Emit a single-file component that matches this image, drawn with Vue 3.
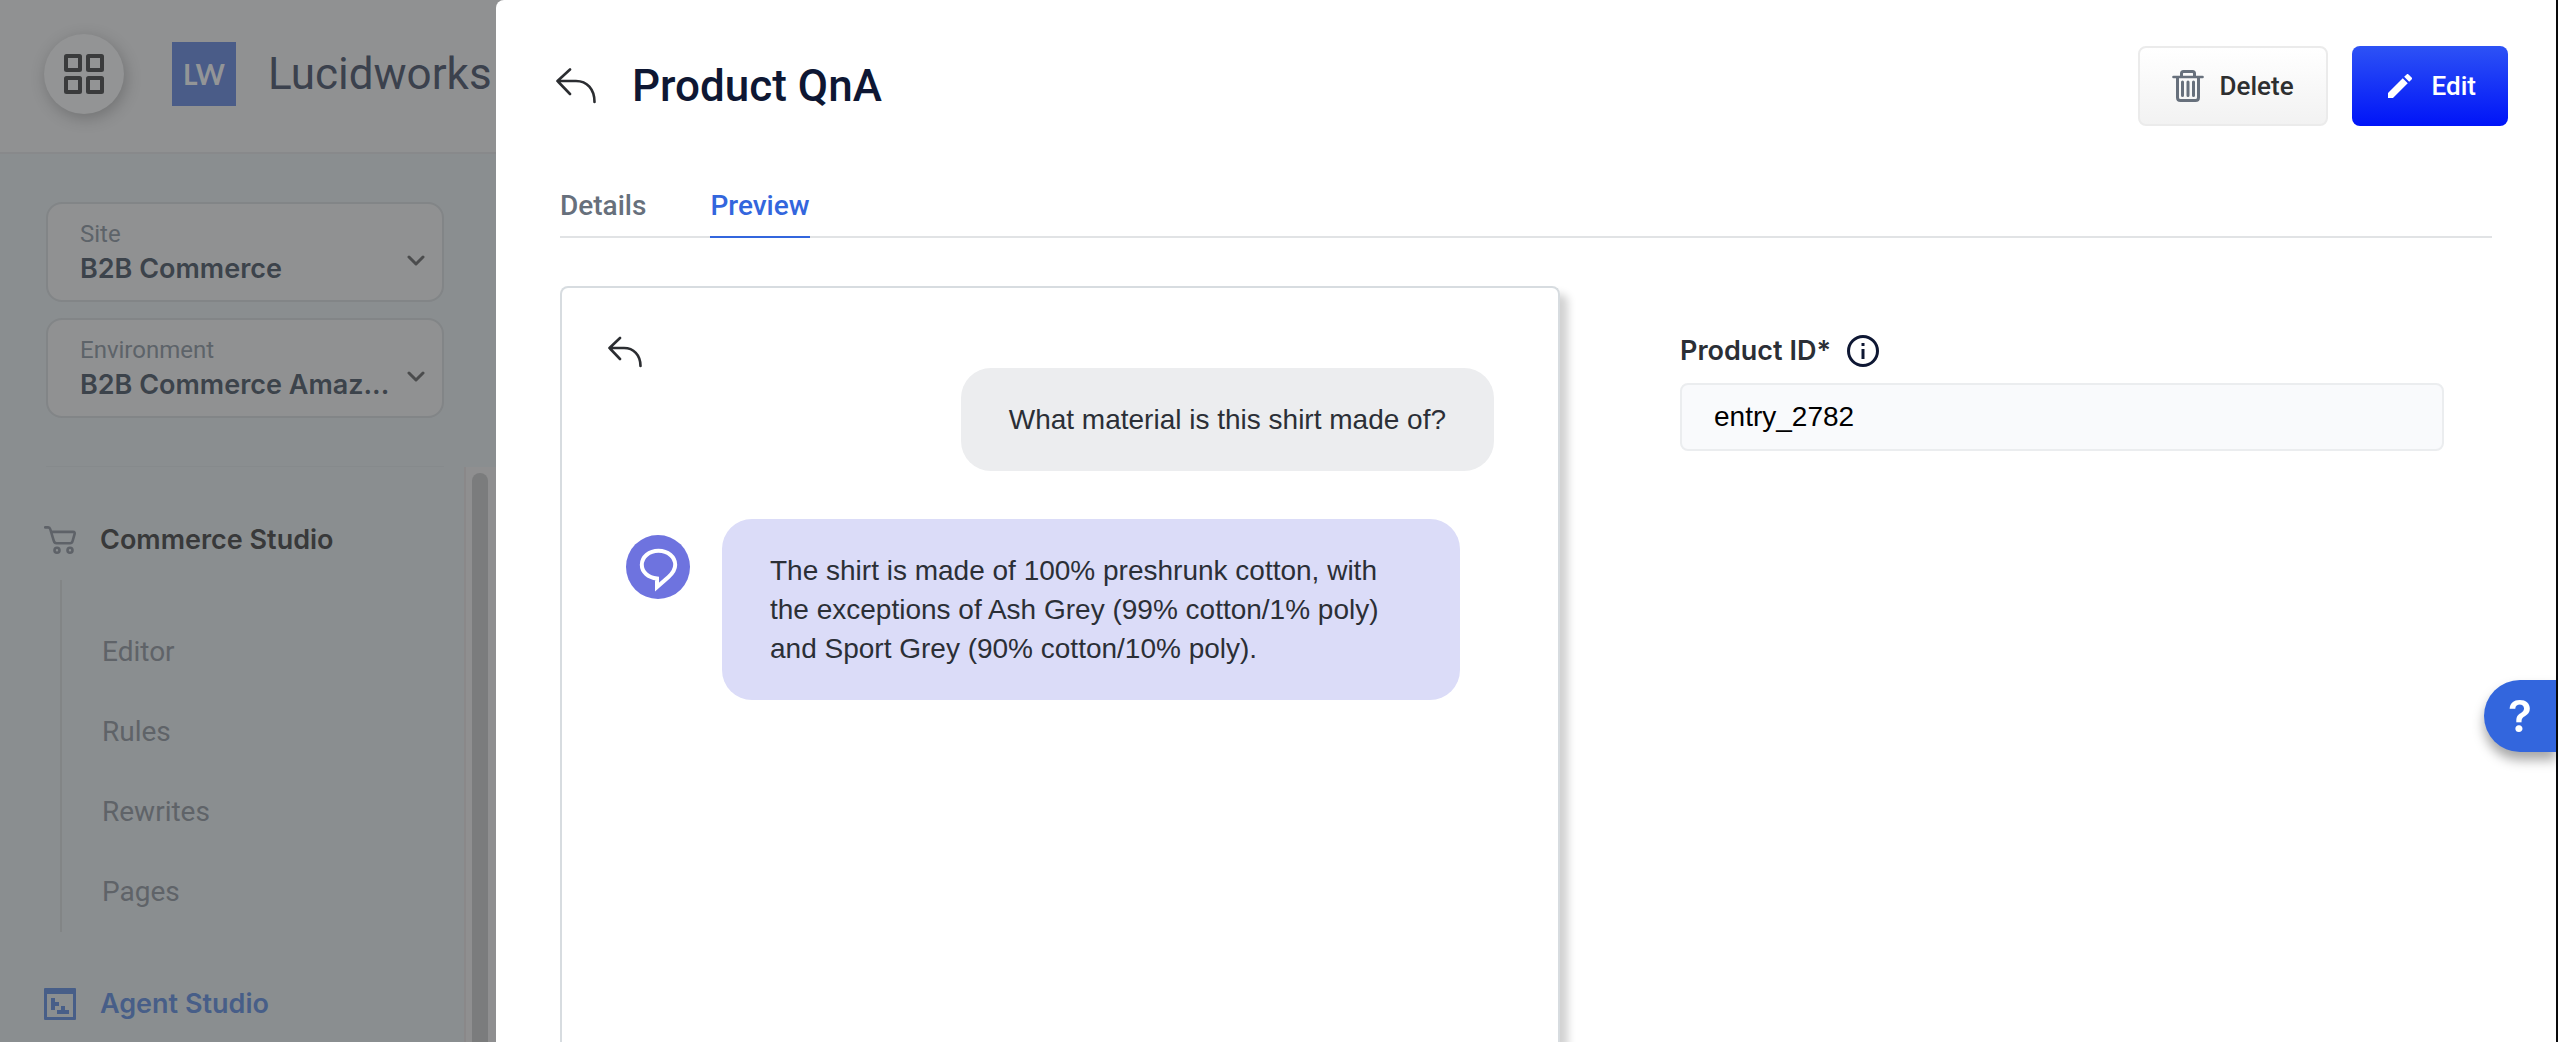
<script setup>
import { ref } from 'vue'

const links = ['Editor', 'Rules', 'Rewrites', 'Pages']
const productId = ref('entry_2782')
const selectors = [
  { id: 'site', label: 'Site', value: 'B2B Commerce' },
  { id: 'environment', label: 'Environment', value: 'B2B Commerce Amaz...' },
]
</script>

<template>
  <div class="app">
    <aside class="sidebar">
      <header class="brand">
        <button class="apps" type="button" aria-label="Applications">
          <svg width="40" height="40" viewBox="0 0 40 40" fill="none" stroke="#3a3b3c" stroke-width="4">
            <rect x="2" y="2" width="14" height="14" rx="0.5" />
            <rect x="24" y="2" width="14" height="14" rx="0.5" />
            <rect x="2" y="24" width="14" height="14" rx="0.5" />
            <rect x="24" y="24" width="14" height="14" rx="0.5" />
          </svg>
        </button>
        <span class="logo">LW</span>
        <span class="brand-name">Lucidworks</span>
      </header>

      <div class="selectors">
        <div v-for="s in selectors" :key="s.id" class="selector">
          <label :for="s.id">{{ s.label }}</label>
          <select :id="s.id">
            <option>{{ s.value }}</option>
          </select>
          <svg class="chevron" width="18" height="12" viewBox="0 0 18 12" fill="none" stroke="#4b4c4d" stroke-width="3" stroke-linecap="round" stroke-linejoin="round">
            <path d="M2 2l7 7 7-7" />
          </svg>
        </div>
      </div>

      <div class="nav-area">
        <nav class="nav">
          <a class="studio" href="#">
            <svg width="32" height="32" viewBox="0 0 32 32" fill="none" stroke="#5e6268" stroke-width="2.6" stroke-linecap="round" stroke-linejoin="round">
              <path d="M1.200 3.400h3c1.200 0 1.700.6 2 1.600l3.600 11.800c.5 1.700 1.200 2.400 2.600 2.400H26c1.500 0 2.200-.7 2.600-2.200l1.900-6.600c.5-1.800 0-2.500-1.500-2.500H8" />
              <circle cx="13" cy="26.200" r="2.500" />
              <circle cx="26" cy="26.200" r="2.500" />
            </svg>
            Commerce Studio
          </a>
          <ul class="links">
            <li v-for="l in links" :key="l"><a href="#">{{ l }}</a></li>
          </ul>
          <a class="studio agent" href="#">
            <svg width="32" height="32" viewBox="0 0 32 32" fill="#475e88">
              <path fill-rule="evenodd" d="M1 0h30a1 1 0 0 1 1 1v30a1 1 0 0 1-1 1H1a1 1 0 0 1-1-1V1a1 1 0 0 1 1-1zM3 6v23h26V6z" />
              <path d="M7 10h4v4h4v4h-4v4H7zM17 18h4v4h4v4H13v-4h4z" />
            </svg>
            Agent Studio
          </a>
        </nav>
        <div class="track"><div class="thumb"></div></div>
      </div>
    </aside>

    <main class="drawer">
      <header class="top">
        <button class="icon-btn" type="button" aria-label="Back">
          <svg width="40" height="36" viewBox="0 0 40 36" fill="none" stroke="#2b2d31" stroke-width="2.600" stroke-linecap="round" stroke-linejoin="round">
            <path d="M14 1.500L1.500 13 14 26M1.500 13H20c11 0 18.500 8 18.500 21" />
          </svg>
        </button>
        <h1>Product QnA</h1>
        <button class="btn delete" type="button">
          <svg width="32" height="32" viewBox="0 0 32 32" fill="none" stroke="#67707c" stroke-width="3" stroke-linecap="round">
            <path d="M1.500 7h29" stroke-width="2.600" />
            <path d="M9.500 6V3.500c0-1.200.8-2 2-2h9c1.200 0 2 .8 2 2V6M5.500 8v19.500c0 1.800 1 3 3 3h15c2 0 3-1.200 3-3V8" />
            <path d="M10.500 12v13.500M16 12v13.500M21.500 12v13.500" />
          </svg>
          Delete
        </button>
        <button class="btn edit" type="button">
          <svg width="24" height="24" viewBox="3 3 18 18" fill="#fff">
            <path d="M3 17.250V21h3.750L17.810 9.940l-3.750-3.750L3 17.250zM20.710 7.040a1 1 0 0 0 0-1.410l-2.340-2.340a1 1 0 0 0-1.410 0l-1.830 1.830 3.750 3.750 1.830-1.830z" />
          </svg>
          Edit
        </button>
      </header>

      <nav class="tabs">
        <a href="#">Details</a>
        <a href="#" class="active" aria-current="page">Preview</a>
      </nav>

      <div class="body">
        <section class="chat">
          <button class="icon-btn" type="button" aria-label="Back to start">
            <svg width="34" height="32" viewBox="0 0 34 32" fill="none" stroke="#2b2d31" stroke-width="2.600" stroke-linecap="round" stroke-linejoin="round">
              <path d="M12 2L1.500 12 12 23M1.500 12H16c9.500 0 16.500 7 16.500 18" />
            </svg>
          </button>
          <p class="bubble question">What material is this shirt made of?</p>
          <div class="reply">
            <svg class="avatar" width="64" height="64" viewBox="0 0 64 64">
              <circle cx="32" cy="32" r="32" fill="#6e73df" />
              <path d="M31 43.500C22 42.500 15.800 37 15.800 29.800 15.800 22 23 15.800 32.500 15.800S49.200 22 49.200 29.800C49.200 34.500 47 38 42.500 42L31 52z" fill="none" stroke="#fff" stroke-width="4" />
            </svg>
            <p class="bubble answer">The shirt is made of 100% preshrunk cotton, with the exceptions of Ash Grey (99% cotton/1% poly) and Sport Grey (90% cotton/10% poly).</p>
          </div>
        </section>

        <form class="form" @submit.prevent>
          <div class="field-head">
            <label for="product-id">Product ID*</label>
            <svg width="32" height="32" viewBox="0 0 32 32">
              <circle cx="16" cy="16" r="14.500" fill="none" stroke="#0e1733" stroke-width="3" />
              <path d="M14.500 8h3v3h-3zM14.500 14h3v10h-3z" fill="#0e1733" />
            </svg>
          </div>
          <input id="product-id" v-model="productId" type="text" />
        </form>
      </div>
    </main>

    <button class="help" type="button" aria-label="Help">?</button>
  </div>
</template>

<style>
body {
  margin: 0;
}
</style>

<style scoped>
.app {
  display: flex;
  height: 100vh;
  overflow: hidden;
  box-sizing: border-box;
  border-right: 2px solid #0a0a0c;
  background: #8f9091;
  font-family: Roboto, "Liberation Sans", sans-serif;
}
button {
  font: inherit;
  cursor: pointer;
}
a {
  color: inherit;
  text-decoration: none;
}
svg {
  display: block;
  flex: none;
}

.sidebar {
  flex: none;
  width: 496px;
  display: flex;
  flex-direction: column;
  background: #8a8e90;
}
.brand {
  display: flex;
  align-items: center;
  height: 152px;
  box-sizing: border-box;
  padding: 0 0 4px 44px;
  background: #909192;
  box-shadow: 0 2px 0 #88898b;
  white-space: nowrap;
}
.apps {
  display: grid;
  place-items: center;
  width: 80px;
  height: 80px;
  border: 0;
  border-radius: 50%;
  background: #939495;
  box-shadow: 2px 4px 16px rgba(0, 0, 0, 0.22);
}
.logo {
  display: grid;
  place-items: center;
  width: 64px;
  height: 64px;
  margin: 0 32px 0 48px;
  background: #4a5c88;
  color: #939597;
  font: 700 28px Lato, sans-serif;
}
.brand-name {
  color: #3b414d;
  font-size: 44px;
}

.selectors {
  display: flex;
  flex-direction: column;
  gap: 16px;
  margin: 0 52px 0 46px;
  padding: 50px 0 48px;
  border-bottom: 1px solid #868a8c;
}
.selector {
  position: relative;
  height: 100px;
  box-sizing: border-box;
  padding: 14px 32px;
  border: 2px solid #828587;
  border-radius: 16px;
  background: #909192;
}
.selector label {
  display: block;
  color: #5d6369;
  font-size: 24px;
  line-height: 32px;
}
.selector select {
  appearance: none;
  display: block;
  width: 100%;
  margin: 0;
  padding: 0;
  border: 0;
  background: none;
  color: #3c434b;
  font: 600 27px/38px Inter, sans-serif;
  white-space: nowrap;
}
.chevron {
  position: absolute;
  top: 51px;
  right: 17px;
}

.nav-area {
  flex: 1;
  min-height: 0;
  display: flex;
}
.nav {
  flex: 1;
  padding: 57px 0 0 44px;
}
.studio {
  display: flex;
  align-items: center;
  gap: 24px;
  color: #38393a;
  font: 600 27px/32px Inter, sans-serif;
}
.agent {
  color: #475e88;
}
.links {
  list-style: none;
  margin: 24px 0 56px 16px;
  padding: 32px 0 0 40px;
  border-left: 2px solid #828586;
}
.links a {
  display: block;
  color: #5f6368;
  font-size: 28px;
  line-height: 80px;
}
.track {
  width: 24px;
  padding: 6px 0 0 6px;
  border-left: 2px solid #8a8889;
  background: #8f8f90;
}
.thumb {
  width: 16px;
  height: 100%;
  border-radius: 8px 8px 0 0;
  background: #7b7c7d;
}

.drawer {
  flex: 1;
  min-width: 0;
  display: flex;
  flex-direction: column;
  box-sizing: border-box;
  padding: 46px 64px 0;
  border-radius: 8px 0 0;
  background: #fff;
}
.top {
  display: flex;
  align-items: center;
  gap: 24px;
  margin: 0 -16px 0 -4px;
}
.icon-btn {
  padding: 0;
  border: 0;
  background: none;
}
h1 {
  flex: 1;
  margin: 0 0 0 12px;
  color: #0e1733;
  font-size: 44px;
  font-weight: 500;
}
.btn {
  display: flex;
  align-items: center;
  height: 80px;
  box-sizing: border-box;
  border-radius: 8px;
  font-size: 26px;
  font-weight: 500;
}
.delete {
  gap: 16px;
  padding: 0 32px;
  border: 2px solid #ebebeb;
  background: linear-gradient(#fff, #f2f2f2);
  color: #2e2f30;
}
.edit {
  gap: 20px;
  padding: 0 32px 0 36px;
  border: 0;
  background: linear-gradient(#2d52f5, #0014f8);
  color: #fff;
}

.tabs {
  display: flex;
  gap: 64px;
  margin-top: 64px;
  box-shadow: inset 0 -2px 0 #e1e3e5;
  color: #67707c;
  font-size: 28px;
  font-weight: 500;
  line-height: 32px;
}
.tabs a {
  padding-bottom: 14px;
  border-bottom: 2px solid transparent;
}
.tabs .active {
  border-color: #3366dd;
  color: #3366dd;
}

.body {
  flex: 1;
  display: grid;
  grid-template-columns: 1000fr 932fr;
  margin-top: 48px;
}
.chat {
  display: flex;
  flex-direction: column;
  align-items: flex-start;
  padding: 48px 64px 0 46px;
  border: 2px solid #d7dce0;
  border-bottom: 0;
  border-radius: 8px 8px 0 0;
  box-shadow: 8px 8px 8px rgba(0, 0, 0, 0.18);
}
.bubble {
  margin: 0;
  padding: 32px 48px;
  border-radius: 30px;
  color: #2b2f36;
  font: 28px/39px "Liberation Sans", sans-serif;
}
.question {
  align-self: flex-end;
  background: #ecedef;
}
.reply {
  display: flex;
  align-items: flex-start;
  gap: 32px;
  margin: 48px 34px 0 18px;
}
.avatar {
  margin-top: 16px;
}
.answer {
  background: #dbdcf8;
}

.form {
  padding: 49px 48px 0 120px;
}
.field-head {
  display: flex;
  align-items: center;
  gap: 16px;
  color: #2b2f36;
  font: 600 27px/32px Inter, sans-serif;
}
.form input {
  width: 100%;
  height: 68px;
  box-sizing: border-box;
  margin-top: 16px;
  padding: 0 32px;
  border: 2px solid #ebedef;
  border-radius: 8px;
  background: #f9fafc;
  color: #000;
  font: 28px "Liberation Sans", sans-serif;
}

.help {
  position: fixed;
  top: 680px;
  right: 2px;
  width: 72px;
  height: 72px;
  padding: 0;
  border: 0;
  border-radius: 36px 0 0 36px;
  background: #3366dd;
  box-shadow: 0 8px 12px rgba(0, 0, 0, 0.35);
  color: #fff;
  font: 600 44px Inter, sans-serif;
}
</style>
